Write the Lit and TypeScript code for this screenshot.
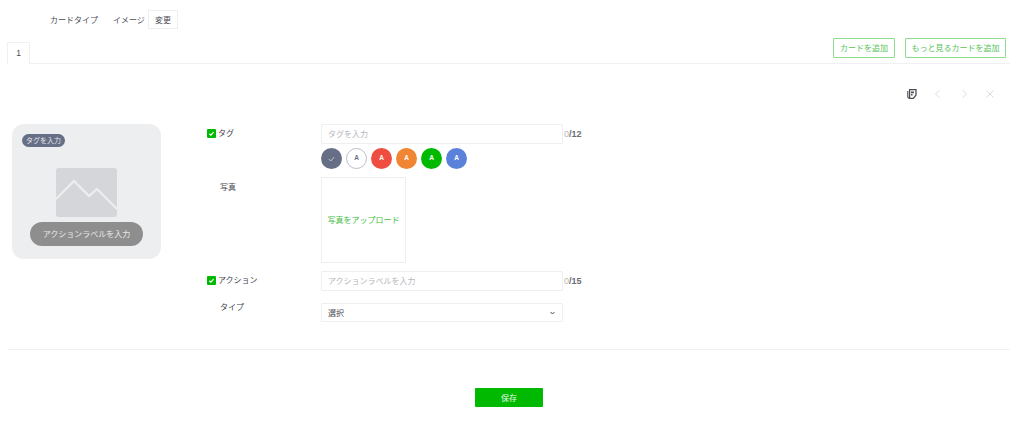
import { LitElement, html, css } from "lit";
import { customElement } from "lit/decorators.js";

const SWATCHES = [
  { bg: "#666f86", fg: "#c9ccd4", check: true },
  { bg: "#ffffff", fg: "#666f86", outline: true },
  { bg: "#ee4d3f", fg: "#ffffff" },
  { bg: "#f08534", fg: "#ffffff" },
  { bg: "#00b900", fg: "#ffffff" },
  { bg: "#5b82db", fg: "#ffffff" },
];

@customElement("app-root")
export class AppRoot extends LitElement {
  static styles = css`
    :host {
      display: block;
      height: 433px;
      overflow: hidden;
      background: #fff;
      color: #4a4d55;
      font-family: "Noto Sans CJK JP", "Noto Sans", sans-serif;
      font-size: 8px;
      line-height: 1;
    }

    .type-row {
      display: flex;
      align-items: center;
      height: 19px;
      padding: 10px 0 0 50px;
    }

    .type-label {
      width: 63px;
    }

    .type-value {
      width: 35px;
    }

    .change-btn {
      width: 30px;
      height: 19px;
      box-sizing: border-box;
      border: 1px solid #eeeff1;
      display: flex;
      align-items: center;
      justify-content: center;
    }

    .tab-bar {
      display: flex;
      align-items: flex-end;
      height: 25px;
      margin: 9px 14px 0 7px;
      border-bottom: 1px solid #eff0f2;
    }

    .tab {
      width: 23px;
      height: 22px;
      box-sizing: border-box;
      margin-bottom: -1px;
      background: #fff;
      border: 1px solid #eff0f2;
      border-bottom: 0;
      display: flex;
      align-items: center;
      justify-content: center;
      font-family: "Liberation Sans", sans-serif;
      font-size: 8.5px;
    }

    .tab-actions {
      margin-left: auto;
      display: flex;
      gap: 10px;
      align-self: flex-start;
      margin-right: 4px;
    }

    .outline-btn {
      height: 20px;
      box-sizing: border-box;
      border: 1px solid #8fdc8f;
      border-radius: 1px;
      color: #55c555;
      display: flex;
      align-items: center;
      justify-content: center;
    }

    .add-card {
      width: 62px;
    }

    .add-more {
      width: 101px;
    }

    .toolbar {
      display: flex;
      justify-content: flex-end;
      align-items: center;
      gap: 16px;
      height: 14px;
      padding: 23px 29px 0 0;
    }

    .toolbar svg {
      width: 10px;
      height: 10px;
      display: block;
    }

    .editor {
      display: flex;
      padding: 23px 0 0 12px;
    }

    .preview {
      width: 149px;
      height: 135px;
      box-sizing: border-box;
      background: #edeef0;
      border-radius: 12px;
      padding: 10px 18px 0;
      display: flex;
      flex-direction: column;
      align-items: center;
    }

    .preview-tag {
      align-self: flex-start;
      margin-left: -8px;
      height: 13px;
      padding: 0 4px;
      border-radius: 7px;
      background: #666f86;
      color: #e6e8ec;
      font-size: 7px;
      display: flex;
      align-items: center;
    }

    .preview-image {
      width: 61px;
      height: 49px;
      margin-top: 21px;
      display: block;
    }

    .preview-action {
      width: 113px;
      height: 24px;
      margin-top: 5px;
      border-radius: 12px;
      background: #8e8e8e;
      color: #e8e8e8;
      display: flex;
      align-items: center;
      justify-content: center;
      flex: none;
    }

    .form {
      margin-left: 46px;
      display: grid;
      grid-template-columns: 114px 242px auto;
      grid-template-rows: 20px 25px 94px 28px 31px;
      align-content: start;
    }

    .label {
      display: flex;
      align-items: flex-start;
      gap: 2px;
      padding-top: 5px;
      color: #43464d;
    }

    .label.plain {
      padding-left: 13px;
    }

    .photo-label {
      padding-top: 14px;
    }

    .check {
      width: 9px;
      height: 9px;
      border-radius: 1px;
      background: #00b900;
      display: block;
      flex: none;
    }

    .input {
      height: 20px;
      box-sizing: border-box;
      border: 1px solid #eeeff1;
      border-radius: 1px;
      padding-left: 6px;
      display: flex;
      align-items: center;
      color: #b4b7bd;
    }

    .counter {
      padding: 6px 0 0 1px;
      font-family: "Liberation Sans", sans-serif;
      font-size: 9px;
      font-weight: 700;
      color: #6a6d74;
    }

    .counter span {
      color: #b4b7bd;
      font-weight: 400;
    }

    .swatches {
      grid-column: 2;
      display: flex;
      gap: 3.8px;
      padding-top: 4px;
    }

    .swatch {
      width: 21.2px;
      height: 21.2px;
      box-sizing: border-box;
      border-radius: 50%;
      display: flex;
      align-items: center;
      justify-content: center;
      font-family: "Liberation Sans", sans-serif;
      font-size: 6.5px;
      font-weight: 700;
    }

    .swatch.outline {
      border: 1px solid #b9bdc9;
    }

    .swatch svg {
      width: 7px;
      height: 6px;
    }

    .photo-cell {
      padding-top: 8px;
    }

    .upload {
      width: 85px;
      height: 86px;
      box-sizing: border-box;
      border: 1px solid #eeeff1;
      display: flex;
      align-items: center;
      justify-content: center;
      color: #3fbd3f;
    }

    .action-label,
    .action-cell,
    .action-counter {
      margin-top: 8px;
    }

    .type-name {
      padding-top: 0;
      margin-top: 12px;
    }

    .select {
      margin-top: 12px;
      height: 19px;
      box-sizing: border-box;
      border: 1px solid #eeeff1;
      border-radius: 1px;
      padding: 0 7px 0 6px;
      display: flex;
      align-items: center;
      justify-content: space-between;
      color: #4a4d55;
    }

    .select svg {
      width: 5px;
      height: 4px;
    }

    .divider {
      height: 1px;
      background: #f0f1f2;
      margin: 27px 14px 0 8px;
    }

    .footer {
      display: flex;
      padding: 38px 0 0 475px;
    }

    .save {
      width: 68px;
      height: 19px;
      background: #00b900;
      border-radius: 1px;
      color: #e9f9e9;
      display: flex;
      align-items: center;
      justify-content: center;
    }
  `;

  checkbox() {
    return html`<svg class="check" viewBox="0 0 9 9">
      <path d="M2.4 4.7 3.9 6.1 6.6 3.2" fill="none" stroke="#fff" stroke-width="1.2" />
    </svg>`;
  }

  render() {
    return html`
      <div class="type-row">
        <span class="type-label">カードタイプ</span>
        <span class="type-value">イメージ</span>
        <span class="change-btn">変更</span>
      </div>

      <div class="tab-bar">
        <div class="tab">1</div>
        <div class="tab-actions">
          <div class="outline-btn add-card">カードを追加</div>
          <div class="outline-btn add-more">もっと見るカードを追加</div>
        </div>
      </div>

      <div class="toolbar">
        <svg viewBox="0 0 10 10">
          <path d="M2.6.7H9V6L6.4 9.3H2.6Z" fill="none" stroke="#4d4f54" stroke-width="1.3" />
          <path d="M.8 2V8.2L2 9.4" fill="none" stroke="#4d4f54" stroke-width="1.1" />
          <path d="M4 2.6H7V4.2H4ZM4 5H5.6V6.4H4Z" fill="#4d4f54" />
        </svg>
        <svg viewBox="0 0 10 10">
          <path d="M6.5 1 2.5 5l4 4" fill="none" stroke="#dcdde0" stroke-width="1" />
        </svg>
        <svg viewBox="0 0 10 10">
          <path d="M3.5 1 7.5 5l-4 4" fill="none" stroke="#dcdde0" stroke-width="1" />
        </svg>
        <svg viewBox="0 0 10 10">
          <path d="M1.5 1.5l7 7M8.5 1.5l-7 7" fill="none" stroke="#dcdde0" stroke-width="1" />
        </svg>
      </div>

      <div class="editor">
        <div class="preview">
          <div class="preview-tag">タグを入力</div>
          <svg class="preview-image" viewBox="0 0 61 49">
            <rect width="61" height="49" rx="3" fill="#d5d6da" />
            <path d="M0 31 18 13 33 28 41 21 61 41" fill="none" stroke="#edeef0" stroke-width="2.2" />
          </svg>
          <div class="preview-action">アクションラベルを入力</div>
        </div>

        <div class="form">
          <div class="label">${this.checkbox()}タグ</div>
          <div class="input">タグを入力</div>
          <div class="counter"><span>0</span>/12</div>

          <div class="swatches">
            ${SWATCHES.map(
              (s) => html`<div
                class="swatch ${s.outline ? "outline" : ""}"
                style="background: ${s.bg}; color: ${s.fg}"
              >
                ${s.check
                  ? html`<svg viewBox="0 0 7 6">
                      <path d="M.8 3 2.8 5 6.2 1" fill="none" stroke="${s.fg}" stroke-width=".9" />
                    </svg>`
                  : "A"}
              </div>`
            )}
          </div>
          <div></div>

          <div class="label plain photo-label">写真</div>
          <div class="photo-cell"><div class="upload">写真をアップロード</div></div>
          <div></div>

          <div class="label action-label">${this.checkbox()}アクション</div>
          <div class="input action-cell">アクションラベルを入力</div>
          <div class="counter action-counter"><span>0</span>/15</div>

          <div class="label plain type-name">タイプ</div>
          <div class="select">
            選択
            <svg viewBox="0 0 5 4">
              <path d="M.6 1 2.5 3 4.4 1" fill="none" stroke="#4a4d55" stroke-width="1" />
            </svg>
          </div>
          <div></div>
        </div>
      </div>

      <div class="divider"></div>
      <div class="footer"><div class="save">保存</div></div>
    `;
  }
}
